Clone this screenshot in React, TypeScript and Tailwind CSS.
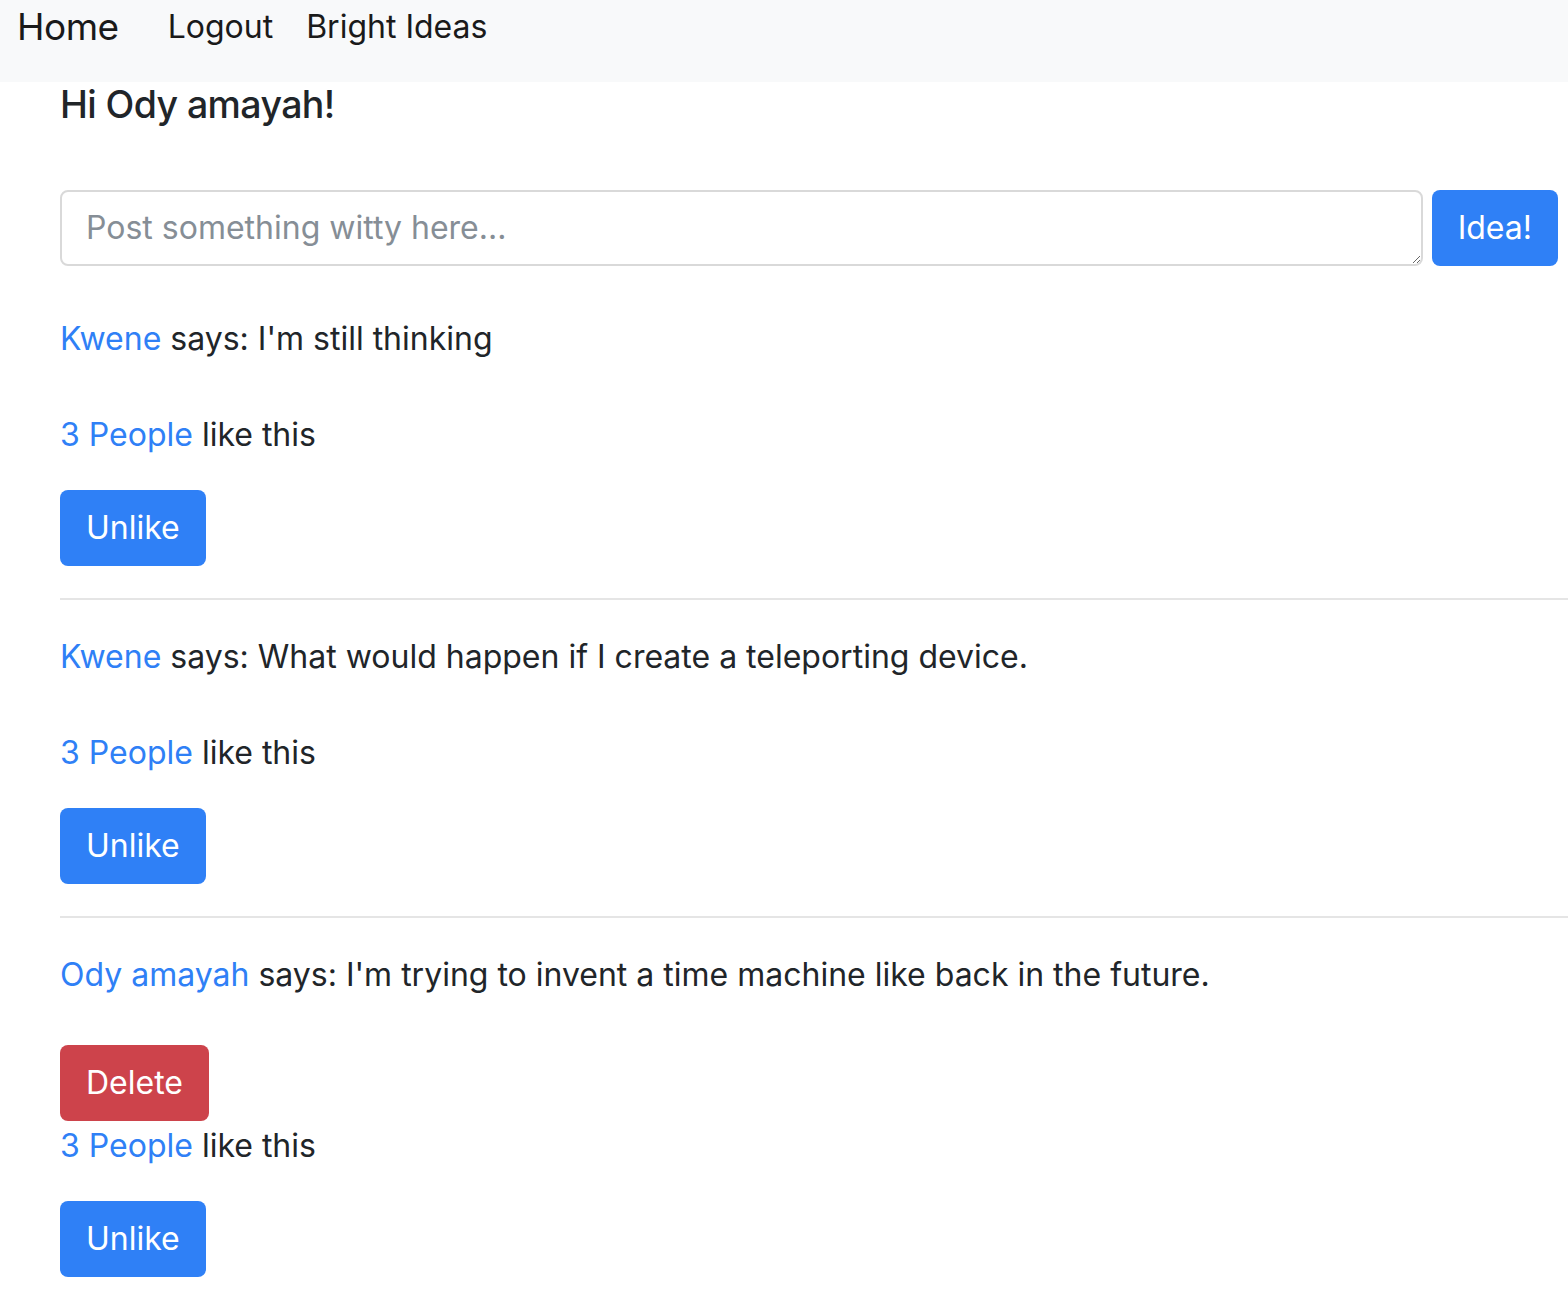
import React from 'react'

type Post = { author: string; text: string; mine?: boolean }

const posts: Post[] = [
  { author: 'Kwene', text: "I'm still thinking" },
  { author: 'Kwene', text: 'What would happen if I create a teleporting device.' },
  { author: 'Ody amayah', text: "I'm trying to invent a time machine like back in the future.", mine: true },
]

export default function App() {
  return (
    <div className="min-h-screen bg-white text-[#212529] font-['Inter',sans-serif] overflow-hidden">
      {/* Navbar */}
      <nav className="h-[82px] bg-[#f8f9fa] flex items-start pl-[17px] pt-[3px]">
        <a className="text-[37px] leading-[48px] text-[#1a1a1a] tracking-[-0.5px]">Home</a>
        <div className="flex ml-[49px] mt-[2px] gap-[33px] text-[32px] leading-[44px] text-[#1a1a1a]">
          <a>Logout</a>
          <a>Bright Ideas</a>
        </div>
      </nav>

      <main className="pl-[60px] flex flex-col">
        <h4 className="text-[37.5px] leading-[46px] font-medium tracking-[-0.6px]">Hi Ody amayah!</h4>

        {/* Post form */}
        <form className="flex mt-[62px] gap-[9px] pr-[10px]">
          <textarea
            placeholder="Post something witty here..."
            className="flex-1 h-[76px] border-2 border-[#d9d9d9] rounded-[8px] px-[24px] py-[12px] text-[32px] leading-[48px] placeholder:text-[#868e96] outline-none"
          />
          <button className="h-[76px] px-[26px] bg-[#2f80f6] text-white text-[32px] rounded-[8px]">Idea!</button>
        </form>

        {posts.map((p, i) => (
          <div key={i} className="flex flex-col items-start">
            {i > 0 && <hr className="w-[calc(100%+60px)] border-t-2 border-[#e5e5e5] mt-[32px] mb-[33px]" />}
            <p className={`text-[32px] leading-[48px] ${i === 0 ? 'mt-[49px]' : ''}`}>
              <a className="text-[#2f80f6]">{p.author}</a> says: {p.text}
            </p>
            {p.mine ? (
              <button className="mt-[46px] h-[76px] px-[26px] bg-[#cd434b] text-white text-[32px] rounded-[8px]">Delete</button>
            ) : null}
            <p className={`text-[32px] leading-[48px] ${p.mine ? 'mt-[1px]' : 'mt-[48px]'}`}>
              <a className="text-[#2f80f6]">3 People</a> like this
            </p>
            <button className="mt-[31px] h-[76px] px-[26px] bg-[#2f80f6] text-white text-[32px] rounded-[8px]">Unlike</button>
          </div>
        ))}
      </main>
    </div>
  )
}
